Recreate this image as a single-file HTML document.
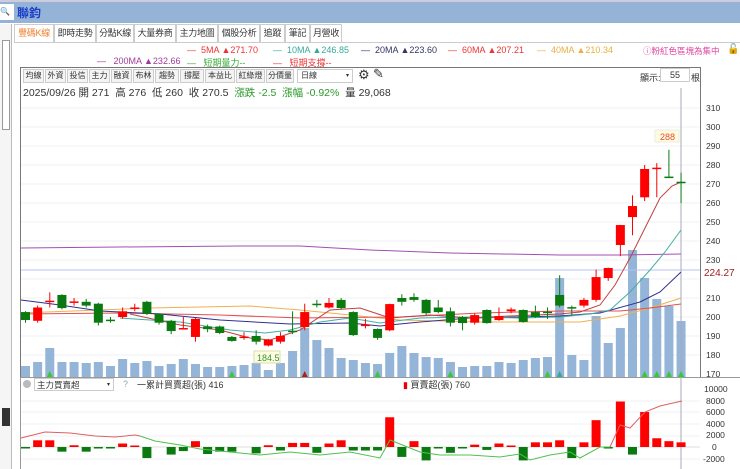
<!DOCTYPE html><html><head><meta charset="utf-8"><style>
*{margin:0;padding:0;box-sizing:border-box}
body{width:740px;height:469px;overflow:hidden;background:#fff;font-family:"Liberation Sans","Noto Sans CJK TC",sans-serif;position:relative;font-size:11px;color:#333}
.abs{position:absolute}
.tab{position:absolute;top:24px;height:18px;border:1px solid #ccc;border-bottom:none;background:#fff;font-size:9px;line-height:17px;text-align:center;color:#333;white-space:nowrap;overflow:hidden;letter-spacing:-0.3px}
.tb{position:absolute;top:0;border:1px solid #ccc;background:#f4f4f4;height:14px;line-height:12px;font-size:8px;text-align:center;color:#333;white-space:nowrap;overflow:hidden}
</style></head><body>
<div class="abs" style="left:0;top:0;width:740px;height:23px;background:#95b3d7;border-top:2px solid #ccd"></div>
<div class="abs" style="left:0;top:4px;width:14px;height:16px;background:#fff;font-size:8px;line-height:16px;overflow:hidden">🔍+</div>
<div class="abs" style="left:17px;top:4px;font-size:12px;font-weight:bold;color:#1a3dc8">聯鈞</div>
<div class="abs" style="left:0;top:24px;width:12px;height:445px;background:#f5f5f5;border-right:1px solid #bbb"></div>
<div class="abs" style="left:2px;top:40px;width:8px;height:90px;border:1px solid #999;background:#fff"></div>
<div class="abs" style="left:2px;top:408px;width:8px;height:18px;background:#333"></div>
<div class="tab" style="left:14px;width:40px;color:#f08030">豐碼K線</div>
<div class="tab" style="left:54px;width:42px">即時走勢</div>
<div class="tab" style="left:96px;width:38px">分點K線</div>
<div class="tab" style="left:134px;width:42px">大量券商</div>
<div class="tab" style="left:176px;width:42px">主力地圖</div>
<div class="tab" style="left:218px;width:42px">個股分析</div>
<div class="tab" style="left:260px;width:25px">追蹤</div>
<div class="tab" style="left:285px;width:25px">筆記</div>
<div class="tab" style="left:310px;width:32px">月營收</div>
<div class="abs" style="left:14px;top:42px;width:726px;border-top:1px solid #ccc"></div>
<div class="abs" style="top:45px;left:0;width:740px;font-size:9px;white-space:nowrap">
<span class="abs" style="left:187px;color:#e33">—&nbsp; 5MA ▲271.70</span>
<span class="abs" style="left:273px;color:#3a9">— &nbsp;10MA ▲246.85</span>
<span class="abs" style="left:361px;color:#336">— &nbsp;20MA ▲223.60</span>
<span class="abs" style="left:448px;color:#e33">— &nbsp;60MA ▲207.21</span>
<span class="abs" style="left:537px;color:#e8b040">— &nbsp;40MA ▲210.34</span>
<span class="abs" style="left:643px;color:#e040a0;font-size:8.5px">ⓘ粉紅色區塊為集中</span>
<span class="abs" style="left:727px;top:-1px;color:#000;font-size:10px">🔓</span>
<span class="abs" style="left:97px;top:11px;color:#a03a9a">— &nbsp; 200MA ▲232.66</span>
<span class="abs" style="left:187px;top:11px;color:#3a3">— &nbsp; 短期量力--</span>
<span class="abs" style="left:273px;top:11px;color:#e33">— &nbsp; 短期支撐--</span>
</div>
<div class="abs" style="left:20px;top:67px;width:681px;height:310px;border:1px solid #777;border-bottom:none"></div>
<div class="abs" style="left:23px;top:69px;width:340px;height:15px">
<span class="tb" style="left:0;width:21px">均線</span><span class="tb" style="left:22px;width:21px">外資</span><span class="tb" style="left:44px;width:21px">投信</span><span class="tb" style="left:66px;width:21px">主力</span><span class="tb" style="left:88px;width:21px">融資</span><span class="tb" style="left:110px;width:21px">布林</span><span class="tb" style="left:132px;width:24px">趨勢</span><span class="tb" style="left:157px;width:24px">撐壓</span><span class="tb" style="left:182px;width:30px">本益比</span><span class="tb" style="left:213px;width:29px">紅綠燈</span><span class="tb" style="left:243px;width:28px">分價量</span><span class="tb" style="left:274px;width:56px;background:#fff;text-align:left;padding-left:3px">日線<span style="position:absolute;right:3px;font-size:6px">▾</span></span></div>
<div class="abs" style="left:358px;top:67px;font-size:13px">⚙</div>
<div class="abs" style="left:373px;top:66px;font-size:13px">✎</div>
<div class="abs" style="left:640px;top:71px;font-size:9px">顯示:</div>
<div class="abs" style="left:660px;top:68px;width:30px;height:14px;border:1px solid #ccc;font-size:9px;text-align:center;line-height:13px">55</div>
<div class="abs" style="left:691px;top:71px;font-size:9px">根</div>
<div class="abs" style="left:23px;top:85px;font-size:10.5px;white-space:nowrap">2025/09/26 開 271&nbsp; 高 276&nbsp; 低 260&nbsp; 收 270.5&nbsp; <span style="color:#2a9a2a">漲跌 -2.5&nbsp; 漲幅 -0.92%</span>&nbsp; 量 29,068</div>
<div class="abs" style="left:20px;top:377px;width:720px;border-top:1px solid #999"></div>
<div class="abs" style="left:20px;top:377px;height:92px;border-left:1px solid #999"></div>
<div class="abs" style="left:23px;top:380px;width:8px;height:8px;border-radius:50%;background:#bbb"></div>
<div class="abs" style="left:34px;top:378px;width:80px;height:13px;border:1px solid #ccc;font-size:8.5px;line-height:12px;padding-left:2px">主力買賣超<span style="float:right;font-size:6px;padding-right:3px">▾</span></div>
<div class="abs" style="left:123px;top:379px;font-size:9px;color:#8ab">?</div>
<div class="abs" style="left:137px;top:378px;font-size:9px">一累計買賣超(張) 416</div>
<div class="abs" style="left:403px;top:378px;font-size:9px"><span style="color:#e00">▮</span> 買賣超(張) 760</div>
<svg class="abs" style="left:0;top:0" width="740" height="469" id="s">
<g font-size="8.5" fill="#333" font-family="Liberation Sans,sans-serif">
<text x="706" y="111">310</text><text x="706" y="130">300</text><text x="706" y="149">290</text><text x="706" y="168">280</text><text x="706" y="187">270</text><text x="706" y="206">260</text><text x="706" y="225">250</text><text x="706" y="244">240</text><text x="706" y="263">230</text><text x="706" y="301">210</text><text x="706" y="320">200</text><text x="706" y="339">190</text><text x="706" y="358">180</text><text x="706" y="377">170</text>
<text x="704" y="392">10000</text><text x="706" y="404">8000</text><text x="706" y="415">6000</text><text x="706" y="427">4000</text><text x="706" y="438">2000</text><text x="712" y="450">0</text><text x="703" y="462">-2000</text>
</g>
<text x="704" y="276" font-size="10" fill="#a02020" font-family="Liberation Sans,sans-serif">224.27</text>
<g id="g"></g>
<rect x="655" y="130" width="24" height="12" fill="#fffbe0" stroke="#eed"/><text x="660" y="140" font-size="9" fill="#e05030" font-family="Liberation Sans,sans-serif">288</text>
<rect x="254" y="351" width="26" height="12" fill="#fffbe0" stroke="#dda"/><text x="257" y="361" font-size="9" fill="#393" font-family="Liberation Sans,sans-serif">184.5</text>
</svg>
<script>
var D=[["g",202.6,198.4,203,197],["r",205,198,206,197],["r",208.6,208.2,213,205],["g",211.6,204.7,212,204],["r",208.2,207.8,210,206],["g",208,206,209.5,205],["g",207,197,207.5,195.5],["g",198.6,198.2,200,197],["r",203,200,205,199],["r",205,204.6,207,203],["g",208,201.6,208.5,201],["g",201.6,197,202,196],["g",198,192.6,198.5,191],["r",194.2,193.8,200,193.5],["r",199,189.5,199.5,187],["g",195,193.6,196,192],["g",195,191.6,195.5,191],["g",189.5,187.4,190,187],["r",189.7,189.3,192,188],["g",190,187,193,185.5],["r",188,185,188.5,184.5],["r",190,187,192,186],["g",192.8,192.4,203,191],["r",202.6,194.7,207,193],["g",207,206.6,209,205],["r",207.4,205,210,204.5],["g",209,204.7,210,204],["g",202.6,190.5,203,190],["r",196,195.6,199,194],["g",193.7,189,194,188],["r",206.8,193,207,192.5],["g",210,208,212,206],["g",210.5,209,212.5,208],["g",209,202,209.5,201],["g",205,202.6,209,202],["g",203,197,205,195],["g",200,196.8,200.5,193],["r",201,197,202,196],["g",203.7,196.8,204,196.5],["r",200.5,198.4,205,198],["r",204,203,205,202],["g",203.7,197.4,204,197],["g",202.6,200,206,199.5],["g",202.8,202.4,205,199],["g",211.6,206,222,205],["g",205.2,204.8,206,201],["r",209,206,210,205],["r",221,209,225,208],["r",225.8,220.5,226,219],["r",248.4,237.9,248.5,232],["r",258.4,252.6,264,243],["r",277.9,263,280,261],["r",278.6,278.2,281,263],["g",273.9,273.5,288,273.5],["g",271.2,270.8,276,260]];
var V=[366,362,348,362,362,363,362,366,359,363,361,366,364,359,364,367,367,366,365,363,370,363,351,328,340,348,358,360,363,364,353,346,353,357,358,362,367,366,366,362,363,360,358,357,278,355,360,316,343,328,250,278,299,306,321];
var B=[-100,1150,1150,-800,300,-800,-200,-200,600,50,-1900,0,-1300,-700,1000,-1200,-800,-800,0,-1100,300,-600,700,700,-1000,600,1150,-600,-600,-600,5100,-1700,1000,-2300,-100,-1000,-100,400,-500,600,100,-2300,800,800,1150,-1900,800,4600,-200,7800,-1300,6000,1500,1000,800];
function Y(p){return 374-(p-170)*1.9}
function X(i){return 25.5+12.14*i}
var s='';
for(var p=180;p<=310;p+=10)s+='<line x1="21" x2="700" y1="'+Y(p)+'" y2="'+Y(p)+'" stroke="#f0f0f4"/>';
[401,412,424,436,459].forEach(function(y){s+='<line x1="21" x2="700" y1="'+y+'" y2="'+y+'" stroke="#f0f0f4"/>'});
s+='<line x1="21" x2="700" y1="447" y2="447" stroke="#ddd"/>';
for(var i=0;i<55;i++){s+='<rect x="'+(X(i)-4.5)+'" y="'+V[i]+'" width="9" height="'+(377-V[i])+'" fill="#94b4d8"/>';}
s+='<line x1="21" x2="700" y1="270" y2="270" stroke="#b8c0f0"/>';
s+='<line x1="681" x2="681" y1="88" y2="469" stroke="#aab"/>';
function pl(pts,c){return '<polyline fill="none" stroke="'+c+'" stroke-width="1" points="'+pts+'"/>'}
s+=pl("21,248 120,247 240,246 300,246 370,250 450,253 560,255 620,255 681,254","#a050b0");
s+=pl("21,313 150,308 250,306 300,310 350,315 400,320 480,322 580,322 620,316 650,308 681,298","#f0b050");
s+=pl("21,314 120,313 220,315 300,318 400,317 480,313 560,311 620,311 650,308 681,304","#e05050");
s+=pl("21,300 60,305 100,311 160,314 220,320 290,324 350,323 380,326 420,322 470,318 520,317 560,316 600,313 640,302 660,292 681,272","#303090");
s+=pl("120,318 180,322 230,330 265,333 290,330 320,322 350,318 380,323 420,318 470,317 520,318 560,317 590,314 610,310 630,292 650,270 665,252 681,230","#40b0a0");
s+=pl("130,314 180,325 220,330 250,338 270,340 300,330 330,310 360,308 390,318 430,315 470,318 510,316 560,314 580,312 600,305 615,285 630,258 645,228 660,198 672,186 681,182","#c04040");
for(var i=0;i<55;i++){var d=D[i],c=d[0]=="r"?"#f00":"#0a7a10",x=X(i);
s+='<line x1="'+x+'" x2="'+x+'" y1="'+Y(d[3])+'" y2="'+Y(d[4])+'" stroke="'+c+'"/>';
var t=Y(d[1]),b=Y(d[2]);s+='<rect x="'+(x-4.5)+'" y="'+t+'" width="9" height="'+Math.max(1.5,b-t)+'" fill="'+c+'"/>';}
for(var i=0;i<55;i++){var v=B[i],h=v*0.00583,x=X(i);if(v==0)continue;
s+='<rect x="'+(x-4.5)+'" y="'+(v>0?447-Math.max(h,1.5):447)+'" width="9" height="'+Math.max(Math.abs(h),1.5)+'" fill="'+(v>0?"#f00":"#0a7a10")+'"/>';}
s+=pl("21,438 45,432 70,433 95,436 115,437 135,435 140,436","#e06060");
s+=pl("140,436 155,441 180,445 200,449 230,452 260,455 290,452 320,455 350,452 380,458 390,440 400,444 420,452 440,455 470,455 500,457 520,454 530,460 550,455 570,452 580,458 600,447 610,447","#50c050");
s+=pl("610,447 620,425 630,428 645,412 660,406 682,401","#e06060");
[[2,"#3c3"],[17,"#3c3"],[23,"#a22"],[29,"#3c3"],[35,"#3c3"],[43,"#3c3"],[44,"#3a9"],[51,"#3c3"],[52,"#3c3"],[53,"#3c3"],[54,"#3c3"]].forEach(function(a){var x=X(a[0]);s+='<polygon points="'+(x-3)+',377 '+(x+3)+',377 '+x+',371" fill="'+a[1]+'"/>'});
document.getElementById('g').innerHTML=s;
</script>
</body></html>
